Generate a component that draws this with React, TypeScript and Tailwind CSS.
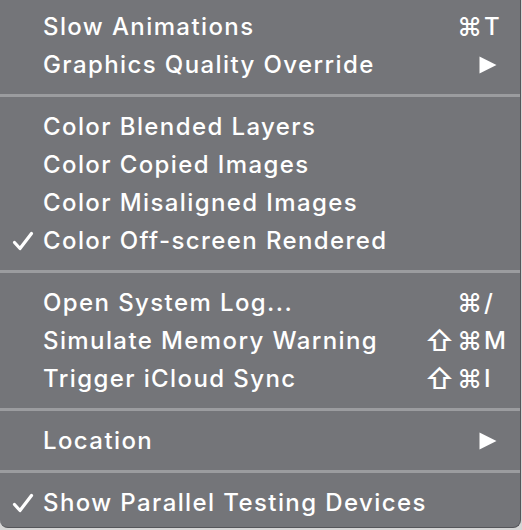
import React from "react";

type Item = {
  label: string;
  checked?: boolean;
  shift?: boolean;
  cmd?: boolean;
  key?: string;
  submenu?: boolean;
};

const groups: Item[][] = [
  [
    { label: "Slow Animations", cmd: true, key: "T" },
    { label: "Graphics Quality Override", submenu: true },
  ],
  [
    { label: "Color Blended Layers" },
    { label: "Color Copied Images" },
    { label: "Color Misaligned Images" },
    { label: "Color Off-screen Rendered", checked: true },
  ],
  [
    { label: "Open System Log...", cmd: true, key: "/" },
    { label: "Simulate Memory Warning", shift: true, cmd: true, key: "M" },
    { label: "Trigger iCloud Sync", shift: true, cmd: true, key: "I" },
  ],
  [{ label: "Location", submenu: true }],
  [{ label: "Show Parallel Testing Devices", checked: true }],
];

function Check() {
  return (
    <svg width="22" height="22" viewBox="0 0 22 22" className="block">
      <path d="M2.5 12.5 L8 18.5 L19.5 3.5" fill="none" stroke="white" strokeWidth="3.2" strokeLinecap="round" strokeLinejoin="round" />
    </svg>
  );
}

function Triangle() {
  return (
    <svg width="18" height="18" viewBox="0 0 18 18" className="block">
      <polygon points="0.5,0.5 17.5,9 0.5,17.5" fill="white" />
    </svg>
  );
}

function Row({ item }: { item: Item }) {
  return (
    <div className="flex h-[38px] items-center">
      <div className="flex w-[43px] shrink-0 items-center justify-end pr-[9px]">
        {item.checked ? <Check /> : null}
      </div>
      <div className="min-w-0 flex-1 whitespace-nowrap tracking-[1.4px]">{item.label}</div>
      {item.cmd ? (
        <div className="flex shrink-0 items-center">
          {item.shift ? <span className="pr-[3px] text-[28px] leading-[38px]">⇧</span> : null}
          <span className="text-[25px]">⌘</span>
          <span className="w-[38px] pl-[2px]">{item.key}</span>
        </div>
      ) : null}
      {item.submenu ? (
        <div className="flex w-[70px] shrink-0 items-center pl-[29px]">
          <Triangle />
        </div>
      ) : null}
    </div>
  );
}

export default function App() {
  return (
    <div className="h-[530px] w-[522px] bg-[#d6d6d6]">
      <div
        className="flex h-[528px] w-[521px] flex-col rounded-b-[8px] border-r border-b border-[#55565a] bg-[#747579] pt-[8px] text-[24px] font-medium leading-[38px] text-white"
        style={{ fontFamily: "Inter, 'Noto Sans', sans-serif" }}
      >
        {groups.map((g, gi) => (
          <React.Fragment key={gi}>
            {gi > 0 ? <div className="mt-[10px] mb-[11px] h-[3px] w-full shrink-0 bg-[#9b9c9f]" /> : null}
            {g.map((it, ii) => (
              <Row key={ii} item={it} />
            ))}
          </React.Fragment>
        ))}
      </div>
    </div>
  );
}
